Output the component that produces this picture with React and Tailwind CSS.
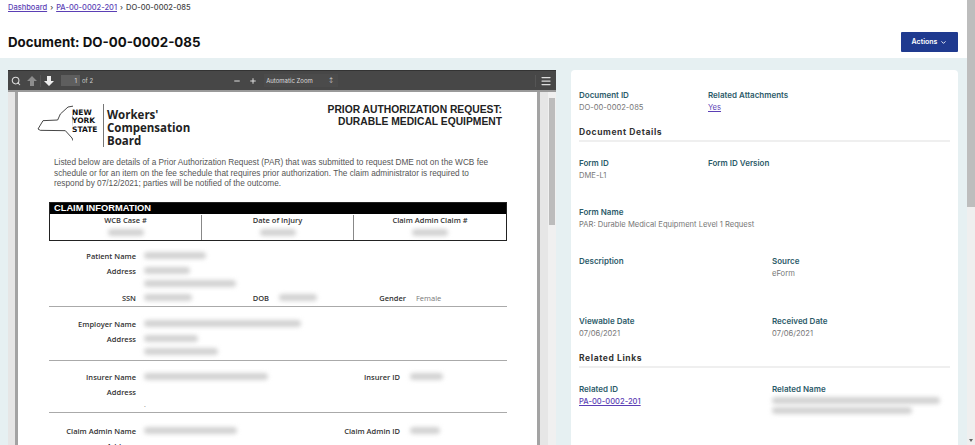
import { ChevronDown, Menu, Minus, Plus, Search } from "lucide-react";

const Blur = ({ w, className = "" }) => (
  <div className={`h-[7px] rounded-sm bg-[#d2d2d2] blur-[2px] ${className}`} style={{ width: w }} />
);

const PdfLabel = ({ children, w = 87, className = "" }) => (
  <div
    className={`shrink-0 text-right text-[7.5px] font-semibold leading-[10px] text-[#333] ${className}`}
    style={{ width: w }}
  >
    {children}
  </div>
);

const Field = ({ label, children }) => (
  <div>
    <div className="text-[8px] font-semibold leading-[10px] text-[#2c5b69]">{label}</div>
    <div className="mt-[3px] text-[7.6px] leading-[10px] text-[#777]">{children}</div>
  </div>
);

const SectionTitle = ({ children, className = "" }) => (
  <div className={`border-b-2 border-[#efefef] pb-[2px] text-[8.5px] font-bold leading-[11px] tracking-[0.6px] text-[#333] ${className}`}>
    {children}
  </div>
);

// solid pdf.js style arrow, points up unless flipped
const BlockArrow = ({ className = "" }) => (
  <svg viewBox="0 0 10 10" className={`h-[10px] w-[10px] ${className}`} fill="currentColor">
    <path d="M5 0 L10 5 H7 V10 H3 V5 H0 Z" />
  </svg>
);

function Toolbar() {
  return (
    <div className="flex h-[20px] shrink-0 items-center border-t border-[#333] bg-[#474747] text-[#ddd]">
      <Search className="ml-[3px] h-[10px] w-[10px]" strokeWidth={2.5} />
      <BlockArrow className="ml-[6px] text-[#8c8c8c]" />
      <div className="ml-[3px] h-[12px] w-px bg-[#555]" />
      <BlockArrow className="ml-[3px] rotate-180 text-[#eee]" />
      <div className="ml-[7px] flex h-[11px] w-[19px] items-center justify-end bg-[#5e5e5e] pr-[3px] text-[6px] text-[#ddd]">1</div>
      <div className="ml-[2px] text-[6px] text-[#ccc]">of 2</div>
      <Minus className="ml-[140px] h-[8px] w-[8px]" strokeWidth={3} />
      <Plus className="ml-[8px] h-[8px] w-[8px]" strokeWidth={3} />
      <div className="ml-[7px] flex h-[13px] w-[74px] items-center justify-between bg-[#4b4b4b] px-[2px] text-[6px] text-[#ddd]">
        <span>Automatic Zoom</span>
        <span className="pr-[3px] text-[5px]">↕</span>
      </div>
      <div className="ml-auto mr-[4px] flex items-center gap-[4px]">
        <div className="h-[12px] w-px bg-[#555]" />
        <Menu className="h-[12px] w-[12px]" strokeWidth={2.5} />
      </div>
    </div>
  );
}

function NyLogo() {
  return (
    <svg width="36" height="38" viewBox="50 25 108 114" className="-mt-[3px] shrink-0" fill="none" stroke="#222" strokeWidth="2.5">
      <path d="M53 97 L68 72 L112 70 L120 52 L143 31 L166 27 L158 60 L160 105 L165 127 L195 123 L160 135 L155 124 L135 102 L60 101 Z" />
    </svg>
  );
}

function PdfPage() {
  return (
    <div className="h-[353px] w-[519px] overflow-hidden bg-white pl-[31px] pr-[30px] font-['Open_Sans',sans-serif]">
      <div className="flex h-[55px] items-start pt-[12px]">
        <div className="-ml-[12px] flex items-center">
          <NyLogo />
          <div className="-ml-[1px] mb-[8px] w-[27px] font-['DejaVu_Sans',sans-serif] text-[7.5px] font-bold leading-[8.5px] text-[#111]">
            NEW<br />YORK<br />STATE
          </div>
          <div className="ml-[4px] h-[43px] w-px bg-[#777]" />
          <div className="ml-[3px] mt-[4px] text-[11.5px] font-bold leading-[13px] text-[#222]">
            Workers'<br />Compensation<br />Board
          </div>
        </div>
        <div className="ml-auto mr-[5px] text-right font-['Liberation_Sans',sans-serif] text-[10.3px] font-bold leading-[12px] text-[#222]">
          PRIOR AUTHORIZATION REQUEST:<br />DURABLE MEDICAL EQUIPMENT
        </div>
      </div>
      <p className="ml-[5px] mt-[11px] w-[440px] font-['Liberation_Sans',sans-serif] text-[8.25px] leading-[10.5px] text-[#555]">
        Listed below are details of a Prior Authorization Request (PAR) that was submitted to request DME not on the WCB fee
        schedule or for an item on the fee schedule that requires prior authorization. The claim administrator is required to
        respond by 07/12/2021; parties will be notified of the outcome.
      </p>
      <div className="mt-[12px] w-[458px] border-[1.5px] border-[#222]">
        <div className="h-[11px] bg-black pl-[4px] font-['Liberation_Sans',sans-serif] text-[9.3px] font-bold leading-[11px] text-white">
          CLAIM INFORMATION
        </div>
        <div className="grid h-[26px] grid-cols-3 divide-x divide-[#888] pt-[1px] text-center text-[7.5px] font-semibold leading-[10px] text-[#333]">
          <div className="flex flex-col items-center">WCB Case #<Blur w={36} className="mt-[4px]" /></div>
          <div className="flex flex-col items-center">Date of Injury<Blur w={36} className="mt-[4px]" /></div>
          <div className="flex flex-col items-center">Claim Admin Claim #<Blur w={36} className="mt-[4px]" /></div>
        </div>
      </div>

      <div className="mt-[10px] w-[458px]">
        <div className="flex items-center"><PdfLabel>Patient Name</PdfLabel><Blur w={62} className="ml-[8px]" /></div>
        <div className="mt-[5px] flex items-center"><PdfLabel>Address</PdfLabel><Blur w={46} className="ml-[8px]" /></div>
        <Blur w={92} className="ml-[95px] mt-[4px]" />
        <div className="mt-[6px] flex items-center border-b border-[#aaa] pb-[3px]">
          <PdfLabel>SSN</PdfLabel>
          <div className="ml-[8px] w-[108px]"><Blur w={48} /></div>
          <PdfLabel w={17}>DOB</PdfLabel>
          <div className="ml-[10px] w-[100px]"><Blur w={38} /></div>
          <PdfLabel w={27}>Gender</PdfLabel>
          <div className="ml-[10px] text-[7.5px] leading-[10px] text-[#777]">Female</div>
        </div>

        <div className="mt-[12px] flex items-center"><PdfLabel>Employer Name</PdfLabel><Blur w={157} className="ml-[8px]" /></div>
        <div className="mt-[5px] flex items-center"><PdfLabel>Address</PdfLabel><Blur w={54} className="ml-[8px]" /></div>
        <Blur w={74} className="ml-[95px] mt-[4px]" />
        <div className="mt-[5px] border-b border-[#aaa]" />

        <div className="mt-[11px] flex items-center">
          <PdfLabel>Insurer Name</PdfLabel>
          <div className="ml-[8px] w-[146px]"><Blur w={124} /></div>
          <PdfLabel w={110}>Insurer ID</PdfLabel>
          <Blur w={33} className="ml-[10px]" />
        </div>
        <div className="mt-[5px] flex items-center"><PdfLabel>Address</PdfLabel></div>
        <div className="ml-[95px] mt-[1px] h-[14px] text-[7px] leading-[14px] text-[#777]">.</div>
        <div className="border-b border-[#aaa]" />

        <div className="mt-[13px] flex items-center">
          <PdfLabel>Claim Admin Name</PdfLabel>
          <div className="ml-[8px] w-[146px]"><Blur w={93} /></div>
          <PdfLabel w={110}>Claim Admin ID</PdfLabel>
          <Blur w={30} className="ml-[10px]" />
        </div>
        <div className="mt-[5px] flex items-center"><PdfLabel>Address</PdfLabel></div>
      </div>
    </div>
  );
}

function PdfViewer() {
  return (
    <div className="flex h-[375px] w-[548px] shrink-0 flex-col">
      <Toolbar />
      <div className="flex flex-1 overflow-hidden border-t-2 border-[#9a9a9a] bg-[#e6e6e6]">
        <div className="flex-1 pl-[7px]">
          <div className="w-[525px] border-x-[3px] border-[#a3a3a3]">
            <PdfPage />
          </div>
        </div>
        <div className="relative w-[8px] shrink-0 bg-[#f0f0f0]">
          <div className="absolute left-[1px] top-[6px] h-[127px] w-[6px] bg-[#bcbcbc]" />
        </div>
      </div>
    </div>
  );
}

function DetailCard() {
  return (
    <div className="h-[375px] w-[387px] shrink-0 rounded-t-sm bg-white px-[8px] pt-[20px] font-['Inter',sans-serif]">
      <div className="grid grid-cols-[129px_1fr]">
        <Field label="Document ID">DO-00-0002-085</Field>
        <Field label="Related Attachments">
          <a className="text-[#5b3fb5] underline">Yes</a>
        </Field>
      </div>
      <SectionTitle className="mt-[14px]">Document Details</SectionTitle>
      <div className="mt-[16px] grid grid-cols-[129px_1fr]">
        <Field label="Form ID">DME-L1</Field>
        <div className="text-[8px] font-semibold leading-[10px] text-[#2c5b69]">Form ID Version</div>
      </div>
      <div className="mt-[26px]">
        <Field label="Form Name">PAR: Durable Medical Equipment Level 1 Request</Field>
      </div>
      <div className="mt-[26px] grid grid-cols-[193px_1fr]">
        <div className="text-[8px] font-semibold leading-[10px] text-[#2c5b69]">Description</div>
        <Field label="Source">eForm</Field>
      </div>
      <div className="mt-[37px] grid grid-cols-[193px_1fr]">
        <Field label="Viewable Date">07/06/2021</Field>
        <Field label="Received Date">07/06/2021</Field>
      </div>
      <SectionTitle className="mt-[14px]">Related Links</SectionTitle>
      <div className="mt-[16px] grid grid-cols-[193px_1fr]">
        <Field label="Related ID">
          <a className="font-medium text-[#5b3fb5] underline">PA-00-0002-201</a>
        </Field>
        <div>
          <div className="text-[8px] font-semibold leading-[10px] text-[#2c5b69]">Related Name</div>
          <Blur w={168} className="mt-[3px]" />
          <Blur w={140} className="mt-[3px]" />
        </div>
      </div>
    </div>
  );
}

export default function App() {
  return (
    <div className="flex h-[445px] w-[975px] overflow-hidden bg-white font-['Inter',sans-serif]">
      <div className="flex w-[967px] flex-col">
        <div className="h-[58px] shrink-0 px-[8px] pt-[2px]">
          <div className="text-[7.5px] font-medium leading-[11px] text-[#444]">
            <a className="text-[#5b3fb5] underline">Dashboard</a>
            <span className="mx-[3px]">›</span>
            <a className="text-[#5b3fb5] underline">PA-00-0002-201</a>
            <span className="mx-[3px]">›</span>
            DO-00-0002-085
          </div>
          <div className="mt-[19px] flex items-center justify-between pr-[1px]">
            <h1 className="text-[13.3px] font-bold leading-[20px] text-[#111]">Document: DO-00-0002-085</h1>
            <button className="flex h-[20px] w-[57px] items-center justify-center gap-[3px] rounded-[1px] bg-[#1f3a8f] text-[7px] font-semibold text-white">
              Actions <ChevronDown className="h-[7px] w-[7px]" strokeWidth={3} />
            </button>
          </div>
        </div>
        <div className="flex flex-1 gap-[15px] bg-[#e6f0f2] pl-[8px] pt-[12px]">
          <PdfViewer />
          <DetailCard />
        </div>
      </div>
      <div className="relative w-[8px] shrink-0 bg-[#efefef]">
        <div className="h-[207px] w-[8px] bg-[#bdbdbd]" />
        <div className="absolute bottom-[3px] left-[2px] h-0 w-0 border-x-[2px] border-t-[3px] border-x-transparent border-t-[#666]" />
      </div>
    </div>
  );
}
